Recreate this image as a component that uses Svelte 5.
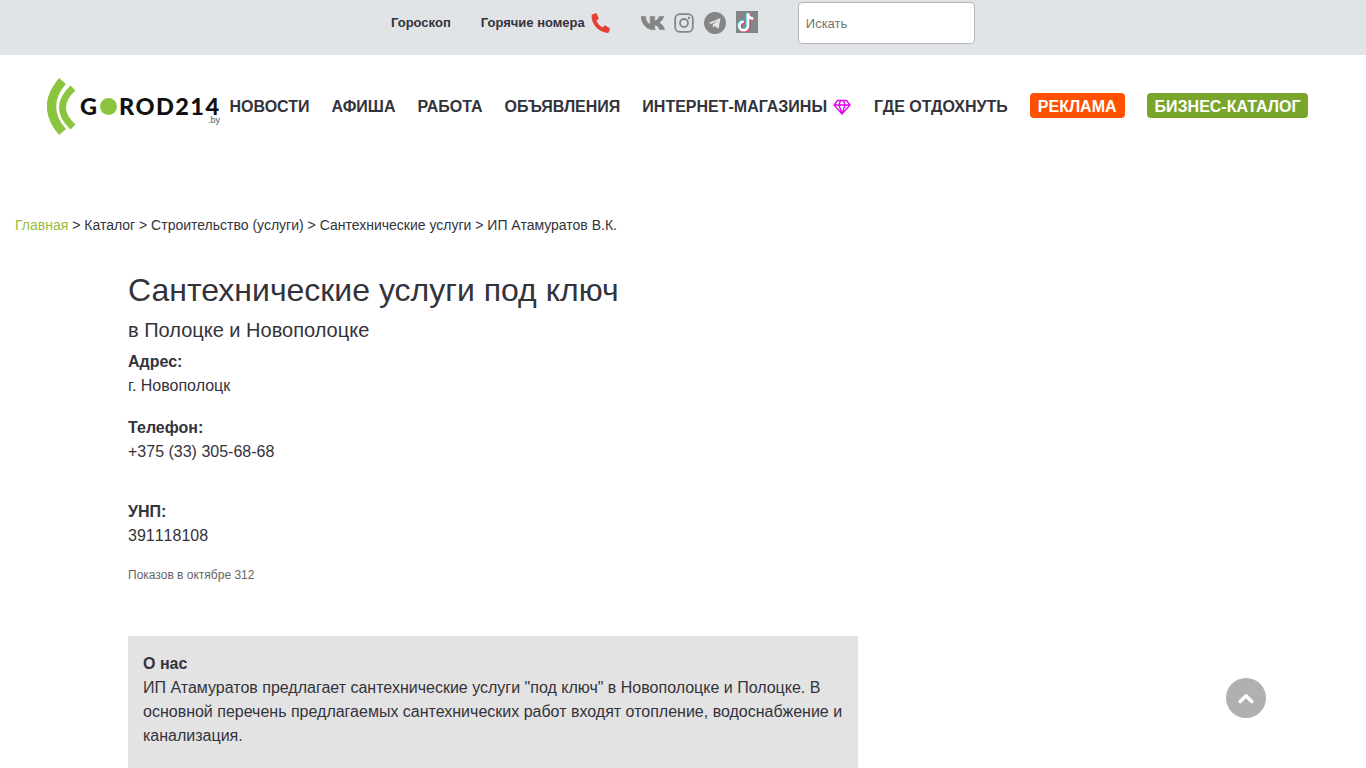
<script>
  const nav = ['Новости', 'Афиша', 'Работа', 'Объявления'];
  const crumbs = ['Каталог', 'Строительство (услуги)', 'Сантехнические услуги', 'ИП Атамуратов В.К.'];
</script>

<header class="top">
  <a class="tl first" href="#h">Гороскоп</a>
  <a class="tl hot" href="#h">Горячие номера</a>
  <svg class="phone" viewBox="2 .5 17.5 18" width="20" height="20"><path d="M3.200 1.600 6 .8c.5-.1.9.1 1.100.5l1.500 3.600c.2.4.1.8-.2 1.100L6.700 7.300c.9 2.500 2.900 4.900 5.400 6.200l1.600-1.500c.3-.3.800-.3 1.200-.1l3.400 2c.4.200.6.700.4 1.100l-1 2.800c-.2.500-.6.800-1.100.7C8.600 17.800 1.900 10.800 2.300 2.800c0-.5.400-1 .9-1.200z" fill="#e53f33"/></svg>
  <svg class="ic vk" viewBox="0 0 21.500 14" width="24" height="14" preserveAspectRatio="none"><path d="M13.200 14C5 14 .9 8.500 0 .4h4.100c.3 5 2.400 7.400 4.200 7.900V.4h3.900v4.500c1.800-.2 3.600-2.300 4.300-4.500h3.800c-.6 3-2.800 5.300-4.300 6.200 1.500.8 4 2.700 5 6.800h-4.300c-.8-2.500-2.700-4.400-4.500-4.600V14z" fill="#858585" stroke="#858585" stroke-width=".7"/></svg>
  <svg class="ic ig" viewBox="0 0 20 20" width="20" height="20"><rect x="1.200" y="1.200" width="17.600" height="17.600" rx="4.500" fill="none" stroke="#858585" stroke-width="1.800"/><circle cx="10" cy="10" r="4" fill="none" stroke="#858585" stroke-width="1.800"/><circle cx="15" cy="5" r="1.200" fill="#858585"/></svg>
  <svg class="ic tg" viewBox="0 0 22 22" width="22" height="22"><circle cx="11" cy="11" r="11" fill="#858585"/><path d="M4.500 11 16.500 6l-2 11-3.700-2.900-1.700 1.700-.3-3.300 5.200-4.600-6.400 4z" fill="#e1e4e7"/></svg>
  <svg class="ic tt" viewBox="0 0 22 22" width="22" height="22"><rect width="22" height="22" fill="#858585"/><path d="M12 2.500V15a4.300 4.300 0 1 1-4.300-4.300M12 2.500c.3 3 2.300 5 5.500 5.200" fill="none" stroke="#2fe0e6" stroke-width="2.600" transform="translate(-1 -.6)"/><path d="M12 2.500V15a4.300 4.300 0 1 1-4.300-4.300M12 2.500c.3 3 2.300 5 5.500 5.200" fill="none" stroke="#f5305f" stroke-width="2.600" transform="translate(1 .6)"/><path d="M12 2.500V15a4.300 4.300 0 1 1-4.300-4.300M12 2.500c.3 3 2.300 5 5.500 5.200" fill="none" stroke="#fff" stroke-width="2.600"/></svg>
  <input class="search" type="text" placeholder="Искать" />
</header>

<nav class="nav">
  <a class="logo" href="#h">
    <svg class="waves" viewBox="0 0 32 60" width="32" height="60"><path d="M15.500 4Q-6.500 29.500 15.500 55" fill="none" stroke="#8bc540" stroke-width="9"/><path d="M26 11Q5 30.500 26 50" fill="none" stroke="#8bc540" stroke-width="7"/></svg>
    <span class="wm">G<i class="dot"></i>ROD214</span>
    <span class="by">.by</span>
  </a>
  <div class="menu">
    {#each nav as n}<a href="#h">{n}</a>{/each}
    <a class="shops" href="#h">Интернет-магазины
      <svg viewBox="0 0 18 16" width="18" height="16"><path d="M4.500 1.500h9L17 6l-8 9-8-9zM1 6h16M6 6l3 9 3-9M6 6l1.500-4.500M12 6l-1.500-4.500" fill="none" stroke="#e400f2" stroke-width="1.300"/></svg>
    </a>
    <a href="#h">Где отдохнуть</a>
    <a class="pill ad" href="#h">Реклама</a>
    <a class="pill biz" href="#h">Бизнес-каталог</a>
  </div>
</nav>

<div class="crumbs"><a href="#h">Главная</a>{#each crumbs as c}{' > '}{c}{/each}</div>

<main class="main">
  <h1>Сантехнические услуги под ключ</h1>
  <h2>в Полоцке и Новополоцке</h2>
  <p class="block"><b>Адрес:</b><br />г. Новополоцк</p>
  <p class="block tel"><b>Телефон:</b><br />+375 (33) 305-68-68</p>
  <p class="block unp"><b>УНП:</b><br />391118108</p>
  <p class="shows">Показов в октябре 312</p>
  <section class="about">
    <b>О нас</b><br />
    ИП Атамуратов предлагает сантехнические услуги "под ключ" в Новополоцке и Полоцке. В основной перечень предлагаемых сантехнических работ входят отопление, водоснабжение и канализация.
  </section>
</main>

<a class="up" href="#h" aria-label="Наверх">
  <svg viewBox="0 0 18 12" width="16" height="11"><path d="M2.500 9.500 9 3l6.500 6.500" fill="none" stroke="#fff" stroke-width="4" stroke-linecap="round" stroke-linejoin="round"/></svg>
</a>

<style>
  :global(body) { margin: 0; overflow: hidden; font-family: "Liberation Sans", Arial, sans-serif; color: #33333b; font-size: 16px; line-height: 24px; background: #fff; }
  a { color: inherit; text-decoration: none; }
  svg { display: block; flex: none; }

  .top { height: 55px; box-sizing: border-box; background: #e1e4e7; display: flex; align-items: center; padding: 0 0 10px 391px; }
  .tl { font-size: 13px; font-weight: 700; line-height: 16px; }
  .hot { margin-left: 30px; }
  .phone { margin-left: 6px; }
  .vk { margin-left: 30px; }
  .ig { margin-left: 9px; }
  .tg { margin-left: 10px; }
  .tt { margin-left: 10px; margin-top: -1px; }
  .search { align-self: flex-start; margin: 2px 0 0 40px; width: 177px; height: 42px; box-sizing: border-box; border: 1px solid #b5b7ba; border-radius: 4px; padding: 0 7px; font: 13px "Liberation Sans", Arial, sans-serif; background: #fff; outline: none; }
  .search::placeholder { color: #757575; opacity: 1; }

  .nav { display: flex; align-items: center; height: 104px; padding-left: 47px; }
  .logo { position: relative; display: flex; align-items: center; width: 182.500px; flex: none; height: 60px; }
  .wm { font-family: Lato, "Liberation Sans", sans-serif; font-weight: 900; font-size: 23.500px; letter-spacing: 1.450px; color: #111; display: flex; align-items: center; line-height: 18px; margin: 0 0 2px 1px; }
  .dot { display: block; width: 17px; height: 17px; border-radius: 50%; background: #8bc540; margin: 0 2px 0 1.500px; }
  .by { position: absolute; left: 161px; top: 39px; font-size: 9px; line-height: 8px; color: #555; }
  .menu { display: flex; align-items: center; gap: 22px; text-transform: uppercase; font-weight: 700; font-size: 16px; line-height: 24px; }
  .shops { display: flex; align-items: center; gap: 6px; padding-right: 1px; }
  .pill { color: #fff; padding: 2px 8px 0; border-radius: 4px; line-height: 23px; margin-bottom: 3px; }
  .ad { background: #ff5100; }
  .biz { background: #7aa52d; }

  .crumbs { margin-top: 54px; padding-left: 15px; font-size: 14px; line-height: 24px; }
  .crumbs a { color: #97bd3e; }

  .main { padding-left: 128px; width: 730px; margin-top: 33px; }
  h1 { margin: 0; font-size: 32px; font-weight: 400; line-height: 40px; }
  h2 { margin: 8px 0 0; font-size: 20px; font-weight: 400; line-height: 24px; }
  .block { margin: 8px 0 0; }
  .tel { margin-top: 18px; }
  .unp { margin-top: 36px; font-kerning: none; }
  .shows { margin: 18px 0 0; font-size: 12px; line-height: 18px; color: #666; }
  .about { margin-top: 52px; background: #e3e3e3; padding: 16px 15px 30px; }

  .up { position: fixed; left: 1226px; top: 678px; width: 40px; height: 40px; border-radius: 50%; background: #b0b0b0; display: flex; align-items: center; justify-content: center; }
</style>
